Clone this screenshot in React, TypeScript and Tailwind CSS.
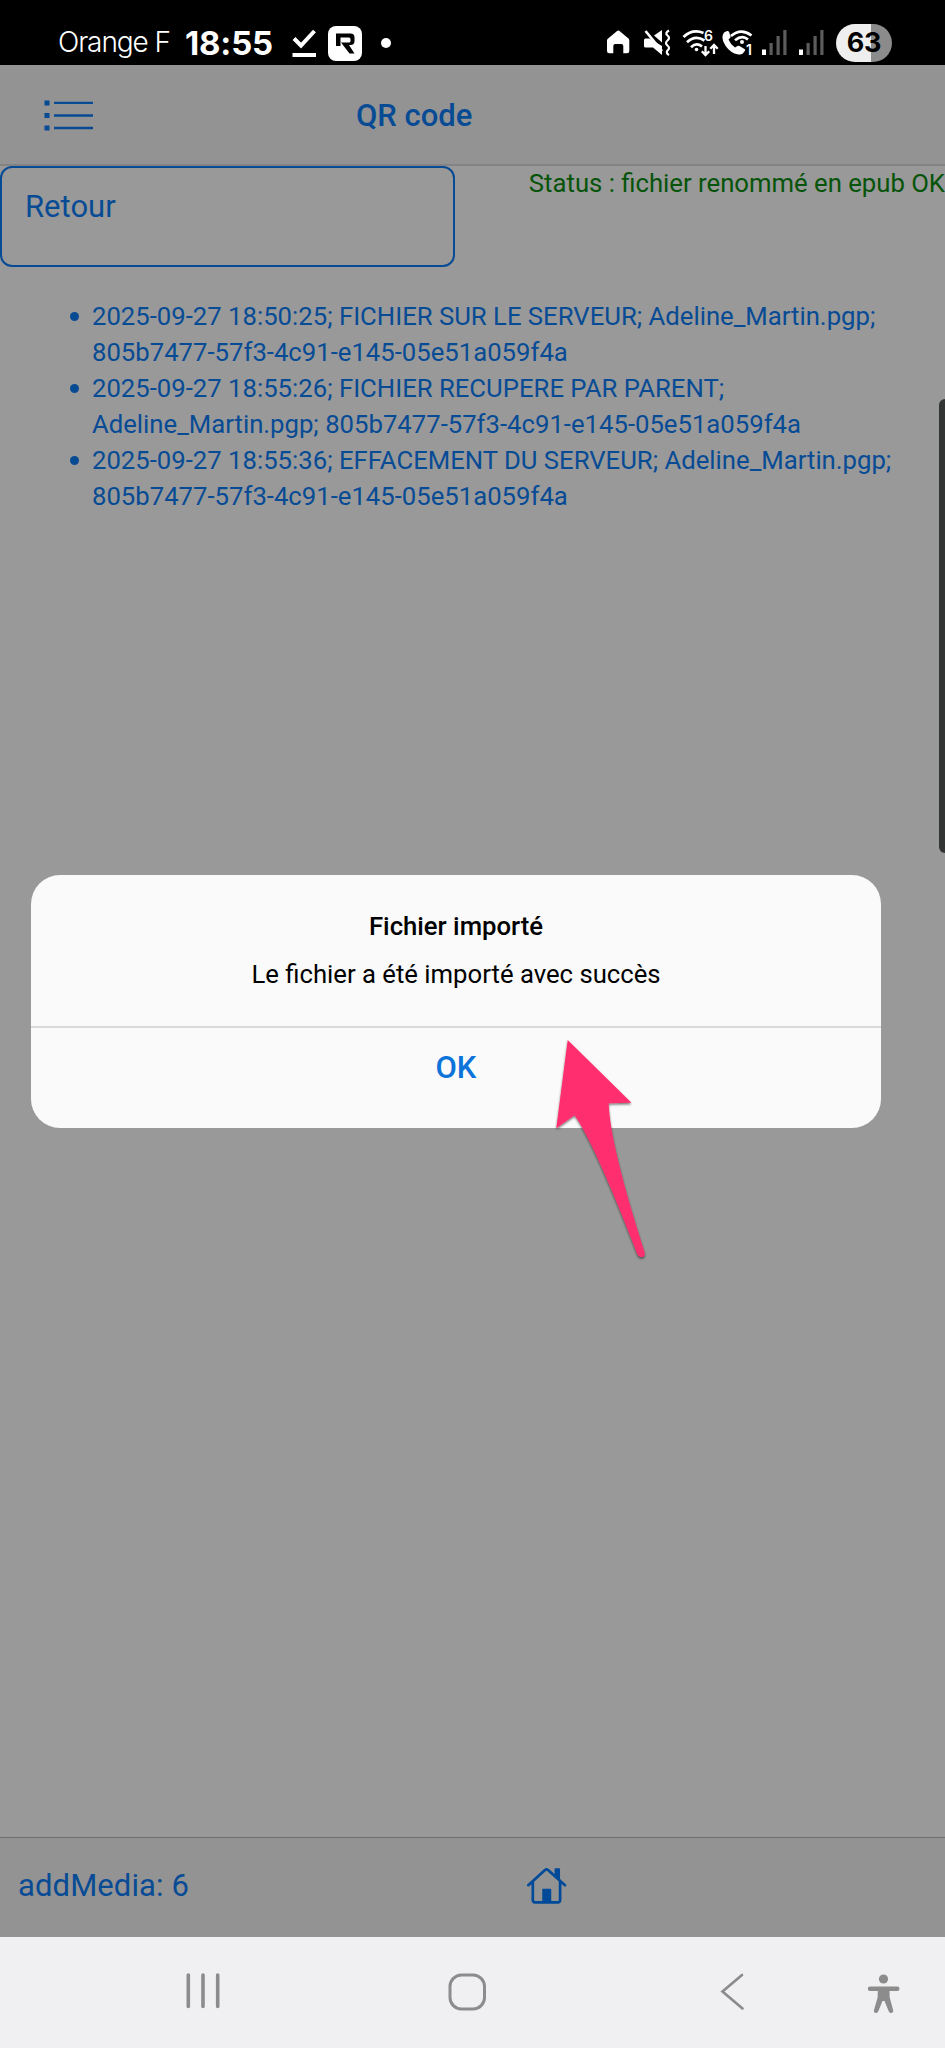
import type { ReactNode } from "react";

const entries = [
  "2025-09-27 18:50:25; FICHIER SUR LE SERVEUR; Adeline_Martin.pgp; 805b7477-57f3-4c91-e145-05e51a059f4a",
  "2025-09-27 18:55:26; FICHIER RECUPERE PAR PARENT; Adeline_Martin.pgp; 805b7477-57f3-4c91-e145-05e51a059f4a",
  "2025-09-27 18:55:36; EFFACEMENT DU SERVEUR; Adeline_Martin.pgp; 805b7477-57f3-4c91-e145-05e51a059f4a",
];

function Signal({ className }: { className: string }) {
  return (
    <svg className={className} width="25" height="38" viewBox="762 24 25 38">
      <rect x="762" y="49.5" width="4" height="5.5" fill="#fff" />
      <path d="M769.5 43h3.2v12h-3.2zM776.5 36h3.2v19h-3.2zM783.3 30h3.2v25h-3.2z" fill="#5c5c5c" />
    </svg>
  );
}

function StatusBar() {
  return (
    <div className="flex h-[65px] shrink-0 items-start bg-black pt-6 text-white">
      <div className="flex h-[38px] items-start">
        <span className="ml-[58px] w-[112px] whitespace-nowrap font-['Inter'] text-[28px] leading-[36px] font-light tracking-[-1.1px]">
          Orange F
        </span>
        <span className="ml-[15px] w-[90px] whitespace-nowrap font-['Inter'] text-[33px] leading-[38px] font-bold tracking-[-0.2px]">
          18:55
        </span>
        <svg className="ml-[17px]" width="25" height="38" viewBox="292 24 25 38" fill="none" stroke="#fff" strokeWidth="4">
          <path d="M294 38.5l7 7L314.5 31M292.5 55h23.5" />
        </svg>
        <svg className="ml-[11px]" width="34" height="38" viewBox="328 24 34 38">
          <rect x="328" y="26" width="34" height="35" rx="8" fill="#fff" />
          <path d="M336 33.5h14.5q4 0 4 4v3.500q0 4-4 4h-1.500l5.500 8.500h-5l-8.500-11h8q1.500 0 1.500-1.500v-2q0-1.500-1.500-1.500h-8.500v8.500h-4.500z" fill="#000" />
        </svg>
        <span className="mt-[14px] ml-[19px] size-[10px] rounded-full bg-white" />
      </div>
      <div className="mr-[53px] ml-auto flex h-[38px]">
        <svg width="23" height="38" viewBox="607 24 23 38">
          <path d="M607 51V40.500q0-1 .8-1.700L616.800 31.200q1.500-1.200 3 0L628.500 38.500q.8.800.8 2V51q0 2.300-2.300 2.300h-3.700V46q0-2-2-2h-6q-2 0-2 2v7.300h-4q-2.300 0-2.300-2.300z" fill="#fff" />
        </svg>
        <svg className="ml-[13px]" width="28" height="38" viewBox="643 24 28 38" fill="#fff">
          <path d="M644 40q0-1.500 1.500-1.500h4L662 46v9L653 47.500h-7.500q-1.500 0-1.500-1.500zM654 35.500l8-5.500v12.500z" />
          <path d="M645.500 31L662 51" stroke="#fff" strokeWidth="2.600" />
          <path d="M669 30.500q-4.500 2.500-1.500 5q3 2.300 0 5q-3 2.500 0 5q3 2.500 0 5q-2 2.500 1.500 4.500" fill="none" stroke="#fff" strokeWidth="2.200" />
        </svg>
        <svg className="ml-[11px]" width="37" height="38" viewBox="682 24 37 38" fill="none" stroke="#fff" strokeWidth="2.700">
          <path d="M683.500 37Q692.500 28.500 703.500 33M687 42.300Q695 34.500 704.500 40.500M691 47.300Q696.500 42 702 46.500" />
          <circle cx="696.500" cy="49.500" r="1.800" fill="#fff" stroke="none" />
          <path d="M705.500 46v8.500M701.800 51.200l3.700 3.800 3.700-3.800M714 54V46M710.300 48.800l3.700-3.800 3.700 3.800" strokeWidth="2.300" />
          <text x="704" y="41" fill="#fff" stroke="none" className="font-['Inter'] text-[14px] font-semibold">6</text>
        </svg>
        <svg className="ml-[3px]" width="33" height="38" viewBox="722 24 33 38" fill="none" stroke="#fff" strokeWidth="2.700">
          <path d="M724 32.500l3-1.500q1.200-.4 2 .8l1.500 4.500q.3 1-.5 1.800l-1.500 1.500q2 5 6.500 8l2.500-1.500q1-.5 2 0l5 3q1 .8.300 2l-2 2.500q-1.500 1.200-4.500.8q-8-1.500-13-9t-1.300-12.900z" fill="#fff" stroke="none" />
          <path d="M731 36Q741 27.500 751.500 35.500M735 40.300Q742 34.500 748 39.500" />
          <circle cx="742" cy="42" r="2" fill="#fff" stroke="none" />
          <text x="746" y="55" fill="#fff" stroke="none" className="font-['Inter'] text-[14px] font-semibold">1</text>
        </svg>
        <Signal className="ml-[7px]" />
        <Signal className="ml-3" />
        <div className="ml-3 flex h-[38px] w-14 items-center justify-center rounded-full bg-[linear-gradient(90deg,#eeeeee_62%,#8b8b8b_62%)] font-['Inter'] text-[27px] font-bold tracking-[-0.3px] text-black">
          63
        </div>
      </div>
    </div>
  );
}

function NavButton({ children, className }: { children: ReactNode; className: string }) {
  return <button className={className}>{children}</button>;
}

export default function App() {
  return (
    <div className="relative flex h-[2048px] w-[945px] flex-col overflow-hidden bg-[#999999] font-['Roboto',sans-serif] text-[#084b95]">
      <StatusBar />

      <header className="flex h-[101px] shrink-0 items-center border-b-2 border-[#838383] bg-[#939393]">
        <svg className="mt-[2px] ml-11" width="50" height="32" viewBox="44 100 50 32" fill="#084b95">
          <path d="M44.500 100.500h5v5h-5zM44.500 113h5v5h-5zM44.500 125.500h5v5h-5zM54 101.700h39v2.400h-39zM54 114.300h39v2.400h-39zM54 126.800h39v2.400h-39z" />
        </svg>
        <h1 className="mt-[2px] ml-[262px] text-[31px] leading-9 font-medium">QR code</h1>
      </header>

      <main className="flex-1">
        <div className="flex items-start justify-between">
          <button className="flex h-[101px] w-[455px] items-start rounded-[12px] border-2 border-[#084b95] pt-[21px] pl-[23px] text-[31px] leading-9">
            Retour
          </button>
          <p className="text-[25.7px] leading-[35px] whitespace-nowrap text-[#06540a]">
            Status : fichier renommé en epub OK
          </p>
        </div>
        <ul className="mt-[31px] flex flex-col pr-10 pl-[70px] text-[25.7px] leading-9">
          {entries.map((entry) => (
            <li key={entry} className="flex items-start">
              <span className="mt-[14px] mr-[13px] size-[9px] shrink-0 rounded-full bg-[#084b95]" />
              <span>{entry}</span>
            </li>
          ))}
        </ul>
      </main>

      <footer className="flex h-[100px] shrink-0 items-center border-t border-[#6f6f6f] bg-[#939393] pb-[3px]">
        <span className="ml-[18px] w-[509px] text-[31px] leading-9 tracking-[0.1px]">addMedia: 6</span>
        <svg width="40" height="38" viewBox="527 1867 40 38" fill="none" stroke="#004a99" strokeWidth="2.700" strokeLinejoin="round" strokeLinecap="round">
          <path d="M528.300 1885.200L545 1870q1.500-1.400 3 0L565 1885.200M532.800 1882v18q0 2.300 2.300 2.300h22.700q2.300 0 2.300-2.300V1882" />
          <path d="M555.300 1869h4v10.500l-4-3.500zM543 1889.500h7.500v12H543z" fill="#004a99" strokeWidth="1.500" />
        </svg>
      </footer>

      <nav className="flex h-[111px] shrink-0 items-start bg-[#f0f0f2] pt-9">
        <NavButton className="ml-[186px]">
          <svg width="34" height="36" viewBox="186 1973 34 36" stroke="#8c8c8c" strokeWidth="3.600" strokeLinecap="round">
            <path d="M188.300 1975v31.500M203 1975v31.500M217.700 1975v31.500" />
          </svg>
        </NavButton>
        <NavButton className="ml-[228px]">
          <svg width="39" height="38" viewBox="448 1972 39 38" fill="none" stroke="#8c8c8c" strokeWidth="3">
            <rect x="450" y="1974" width="34.500" height="34" rx="11.500" />
          </svg>
        </NavButton>
        <NavButton className="ml-[233px]">
          <svg width="26" height="38" viewBox="720 1972 26 38" fill="none" stroke="#8c8c8c" strokeWidth="2.700" strokeLinecap="round" strokeLinejoin="miter">
            <path d="M742 1974L722.500 1990.500L742.500 2007.500" />
          </svg>
        </NavButton>
        <NavButton className="ml-[121px]">
          <svg width="34" height="40" viewBox="867 1972 34 40" fill="#8c8c8c">
            <circle cx="883.500" cy="1978" r="4.600" />
            <path d="M870 1985.500h27.500q2 0 2 2.200t-2 2.200h-8l.2 6.600 3.400 12.500q.5 2.500-1.500 3t-2.900-1.700L884.500 2000h-2l-4.200 10.300q-1 2.200-2.900 1.700t-1.400-3l3.600-12.500.2-6.600h-8q-2 0-2-2.200t2.200-2.200z" />
          </svg>
        </NavButton>
      </nav>

      <div className="absolute top-[399px] right-0 h-[454px] w-[6px] rounded-l-[7px] bg-[#333535]" />

      <section role="dialog" className="absolute top-[875px] left-[31px] flex h-[253px] w-[850px] flex-col rounded-[29px] bg-[#fafafa] text-center text-black">
        <div className="flex h-[153px] flex-col border-b-2 border-[#d8d8d8] pt-[34px]">
          <h2 className="text-[25.7px] leading-[34px] font-medium">Fichier importé</h2>
          <p className="mt-[14px] text-[25.7px] leading-[34px]">Le fichier a été importé avec succès</p>
        </div>
        <button className="mt-5 text-[31px] leading-10 font-medium text-[#0b73d9]">OK</button>
      </section>

      <svg className="absolute top-[1034px] left-[550px]" width="110" height="240" viewBox="550 1034 110 240">
        <defs>
          <filter id="shadow" x="-20%" y="-10%" width="140%" height="120%">
            <feDropShadow dx="0" dy="1.500" stdDeviation="1.300" floodColor="#000" floodOpacity="0.550" />
          </filter>
        </defs>
        <path
          filter="url(#shadow)"
          fill="#ff2f6e"
          d="M567.700 1040L631.500 1102.700L608.700 1103.300Q610 1145 644.800 1253Q645.300 1257 641.300 1257.200Q638.500 1257 637.300 1254Q594 1142 574.500 1115.200L556.300 1128.300Z"
        />
      </svg>
    </div>
  );
}
